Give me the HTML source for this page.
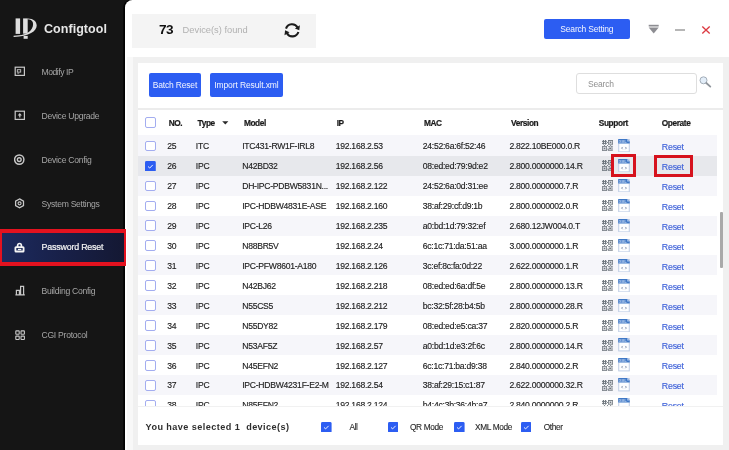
<!DOCTYPE html>
<html lang="en">
<head>
<meta charset="utf-8">
<title>Configtool</title>
<style>
*{box-sizing:border-box;margin:0;padding:0}
html,body{width:729px;height:450px;overflow:hidden}
body{position:relative;background:#151515;font-family:"Liberation Sans",Arial,sans-serif;font-size:8.1px;color:#222;-webkit-font-smoothing:antialiased}
#app{position:absolute;left:0;top:0;width:729px;height:450px;will-change:transform}
.abs{position:absolute}
/* sidebar */
#side{position:absolute;left:0;top:0;width:125px;height:450px;background:#151515}
#brand{position:absolute;left:44px;top:20.2px;height:18px;line-height:18px;font-size:12.5px;font-weight:700;color:#e6e6e6;letter-spacing:0.05px}
.mi{position:absolute;left:0;width:125px;height:30px;color:#a6a6a6;font-size:8.6px;letter-spacing:-0.27px}
.mi .t{position:absolute;left:41.5px;top:0.6px;line-height:30px;white-space:nowrap}
.mi svg{position:absolute;left:14.1px;top:9.5px}
.mi.act{color:#f4f4f4}
#actbox{position:absolute;left:0;top:228.7px;width:125.8px;height:37.7px;border:4px solid #e3121f;border-left-width:2.8px;border-right-width:2.8px;background:linear-gradient(90deg,#1c2a5e 0%,#182048 50%,#141833 100%)}
/* main */
#main{position:absolute;left:124.6px;top:0;width:605px;height:450px;background:#fff;border-top-left-radius:7.5px;box-shadow:-1.7px 0 0 #020202}
#found{position:absolute;left:132.4px;top:13.5px;width:183.4px;height:34.3px;background:#f4f4f4}
#cnt{position:absolute;left:159px;top:20px;line-height:19px;font-size:13.6px;font-weight:700;color:#111;letter-spacing:-0.55px}
#dfound{position:absolute;left:182.6px;top:20.5px;line-height:18px;font-size:9.3px;color:#b1b1b1}
#ss{position:absolute;left:543.5px;top:18.9px;width:86.7px;height:20.6px;background:#2c5df2;border-radius:2px;color:#f2f5ff;text-align:center;line-height:20.8px;font-size:8.5px;letter-spacing:-0.2px}
#gray{position:absolute;left:132.8px;top:57.4px;width:597px;height:393px;background:#f0f0f0}
#card{position:absolute;left:138.4px;top:63.2px;width:584.6px;height:382.1px;background:#fff;overflow:hidden}
.btn{position:absolute;top:10.2px;height:23.2px;background:#2c5df2;border-radius:2px;color:#f2f5ff;text-align:center;line-height:25.4px;white-space:nowrap;font-size:8.5px;letter-spacing:-0.17px}
#search{position:absolute;left:438.1px;top:10.3px;width:120.2px;height:20.2px;border:1px solid #dedede;border-radius:3px;background:#fff}
#search span{position:absolute;left:10.5px;top:0.4px;line-height:18.6px;color:#909090;font-size:8.5px;letter-spacing:-0.2px}
#hline{position:absolute;left:0;top:44.4px;width:584.6px;height:2px;background:#ececec}
#thead{position:absolute;left:0;top:46px;width:579px;height:25.8px;font-weight:700;font-size:8.3px;letter-spacing:-0.38px;color:#1a1a1a;-webkit-text-stroke:0.2px currentColor}
#thead span{position:absolute;top:0.6px;line-height:26.4px;white-space:nowrap}
#tbody{position:absolute;left:0;top:71.8px;width:579px;height:271px;overflow:hidden;background:linear-gradient(#f6f6fa,#f6f6fa) 0 0/100% 2px no-repeat}
.row{position:absolute;left:0;width:579px;height:19.95px;background:#fff}
.row.odd{background:#f6f6fa}
.row.sel{background:#e7e8ec}
.row .c{position:absolute;top:0.3px;line-height:20.6px;white-space:nowrap;font-size:8.6px;letter-spacing:-0.26px;-webkit-text-stroke:0.14px currentColor}
.cb{position:absolute;left:6.8px;top:4.9px;width:10.8px;height:10.8px;border:1.1px solid #a3adf0;border-radius:2px;background:#fff}
.cb.on{border:0;background:none}
.cb svg{display:block;width:10.8px;height:10.8px}
.no{left:28.9px}.ty{left:57.4px}.mo{left:103.8px}.ip{left:197.3px}.mac{left:284.4px}.ver{left:371px}
.rs{left:523.4px;top:1.2px !important;color:#3f62d9;font-size:8.8px !important;letter-spacing:-0.2px !important}
.row svg.qr{position:absolute;left:463.8px;top:4.4px}
.row svg.xml{position:absolute;left:479.2px;top:3.2px}
.hl{position:absolute;border:3.2px solid #d6121d}
#foot{position:absolute;left:0;top:343px;width:584.6px;height:39.2px;background:#fff;border-top:1px solid #f1f1f1}
#sel{position:absolute;left:7.2px;top:10.1px;line-height:20px;font-size:9.1px;letter-spacing:0.44px;font-weight:700;color:#2e2e2e;white-space:pre}
.fcb{position:absolute;top:14.4px;width:10.6px;height:10.6px}
.fcb svg{display:block;width:10.6px;height:10.6px}
.fl{position:absolute;top:9.9px;line-height:20px;font-size:8.3px;letter-spacing:-0.33px;color:#2a2a2a;white-space:nowrap;-webkit-text-stroke:0.12px currentColor}
#thumb{position:absolute;left:581.2px;top:149.2px;width:3.2px;height:55.4px;background:#a9a9a9;border-radius:1px}
</style>
</head>
<body>
<div id="app">
<div id="side">
  <svg class="abs" style="left:13px;top:17px" width="25" height="23" viewBox="0 0 25 23">
    <g fill="#dedede">
      <path d="M2.6 1.4H7.1V16.9H2.6Z"/>
      <path d="M10.1 1.4H14.7V16.7H10.1Z"/>
      <path d="M10.6 18.9H14.7V21.8H10.6Z"/>
      <path d="M14.7 1.4C20.5 1.4 23.7 4.4 23.7 8.6C23.7 14 16.5 19.6 0.6 20L0.6 18.7C9 18.7 14.4 16.9 17.3 13.8C20 10.8 20.6 7.6 19.7 5.1C19 3.3 17.3 2.4 14.7 2.2Z"/>
    </g>
  </svg>
  <div id="brand">Configtool</div>

  <div class="mi" style="top:56.5px">
    <svg style="top:9.2px" width="11" height="11" viewBox="0 0 11 11"><rect x="1.2" y="1.2" width="9.2" height="8.2" fill="none" stroke="#c8c8c8" stroke-width="1.2"/><rect x="3.3" y="3.7" width="3.4" height="2.4" fill="none" stroke="#c8c8c8" stroke-width="0.9"/><path d="M3.3 7.2H5.2" stroke="#c8c8c8" stroke-width="0.8"/></svg>
    <span class="t" style="letter-spacing:-0.45px">Modify IP</span></div>
  <div class="mi" style="top:100.8px">
    <svg style="top:8.8px" width="11" height="11" viewBox="0 0 11 11"><rect x="1.2" y="1.2" width="9.2" height="8.2" fill="none" stroke="#c8c8c8" stroke-width="1.2"/><path d="M5.8 3.1L7.9 5.5H6.4V7.5H5.2V5.5H3.7Z" fill="#c8c8c8"/></svg>
    <span class="t">Device Upgrade</span></div>
  <div class="mi" style="top:144.4px">
    <svg width="11" height="11" viewBox="0 0 11 11"><circle cx="5.25" cy="5.6" r="4.65" fill="none" stroke="#c8c8c8" stroke-width="1.45"/><circle cx="5.25" cy="5.6" r="1.9" fill="none" stroke="#c8c8c8" stroke-width="1.35"/></svg>
    <span class="t">Device Config</span></div>
  <div class="mi" style="top:188.3px">
    <svg width="11" height="11" viewBox="0 0 11 11"><path d="M5.55 0.9L9.5 3.1V7.6L5.55 9.8L1.6 7.6V3.1Z" fill="none" stroke="#c8c8c8" stroke-width="1.25"/><circle cx="5.55" cy="5.35" r="1.5" fill="none" stroke="#c8c8c8" stroke-width="1.15"/></svg>
    <span class="t">System Settings</span></div>
  <div class="mi" style="top:275.5px">
    <svg style="top:9.6px;left:14.8px" width="11" height="11" viewBox="0 0 11 11"><path d="M0.4 9.9H9.8M1.4 9.9V5.4H4.4V9.9M4.4 9.9M5.6 9.9V1.3H8.6V9.9" fill="none" stroke="#c8c8c8" stroke-width="1.2"/></svg>
    <span class="t">Building Config</span></div>
  <div class="mi" style="top:319.3px">
    <svg style="top:10.8px;left:14.8px" width="11" height="11" viewBox="0 0 11 11"><g fill="none" stroke="#c8c8c8" stroke-width="1.1"><rect x="0.8" y="0.9" width="3.4" height="3.4" rx="0.5"/><rect x="6" y="0.9" width="3.4" height="3.4" rx="0.5"/><rect x="0.8" y="6.1" width="3.4" height="3.4" rx="0.5"/><rect x="6" y="6.1" width="3.4" height="3.4" rx="0.5"/></g></svg>
    <span class="t">CGI Protocol</span></div>
</div>

<div id="main"></div>
<div id="actbox"></div>
<div class="mi act" style="top:232.2px">
    <svg width="11" height="11" viewBox="0 0 11 11"><path d="M3.6 5V3.6C3.6 2.2 4.5 1.5 5.5 1.5C6.5 1.5 7.4 2.2 7.4 3.6V5" fill="none" stroke="#f4f4f4" stroke-width="1.7"/><rect x="1.4" y="5.2" width="8.2" height="4.3" rx="0.6" fill="none" stroke="#f4f4f4" stroke-width="1.8"/><rect x="3.9" y="6.8" width="3.4" height="1.2" fill="#f4f4f4"/></svg>
    <span class="t" style="font-size:8.9px;letter-spacing:-0.2px;top:-0.3px;-webkit-text-stroke:0.2px currentColor">Password Reset</span></div>

<div id="found"></div>
<div id="cnt">73</div>
<div id="dfound">Device(s) found</div>
<svg class="abs" style="left:283px;top:21.5px" width="18" height="17" viewBox="0 0 18 17">
  <g fill="none" stroke="#1c1c1c" stroke-width="2.1">
    <path d="M3 6.6A6.3 6.3 0 0 1 14.6 5.6"/>
    <path d="M15.4 10A6.3 6.3 0 0 1 3.8 11"/>
  </g>
  <path d="M16.9 3.3L16.3 8.3L11.9 6.4Z" fill="#1c1c1c"/>
  <path d="M1.5 13.3L2.1 8.3L6.5 10.2Z" fill="#1c1c1c"/>
</svg>
<div id="ss">Search Setting</div>
<svg class="abs" style="left:647.5px;top:24px" width="12" height="11" viewBox="0 0 12 11"><rect x="0.7" y="0.8" width="10" height="1.7" fill="#8d8d92"/><path d="M0.7 3.6H10.7L5.7 9.4Z" fill="#8d8d92"/></svg>
<div class="abs" style="left:675px;top:28.6px;width:9.6px;height:2px;background:#b6b6b6"></div>
<svg class="abs" style="left:701px;top:24.5px" width="10" height="10" viewBox="0 0 10 10"><path d="M1.3 1.6L8.7 8.5M8.7 1.6L1.3 8.5" stroke="#dc3a42" stroke-width="1.35" fill="none"/></svg>

<div class="abs" style="left:126.6px;top:57.4px;width:7px;height:393px;background:#f8f8f8"></div>
<div id="gray"></div>
<div id="card">
  <div class="btn" style="left:10.2px;width:52.6px">Batch Reset</div>
  <div class="btn" style="left:71.8px;width:72.4px;letter-spacing:-0.1px">Import Result.xml</div>
  <div id="search"><span>Search</span></div>
  <svg class="abs" style="left:560px;top:13px" width="14" height="13" viewBox="0 0 14 13">
    <circle cx="5.5" cy="4.3" r="3.5" fill="#e3eef9" stroke="#a3adb8" stroke-width="1"/>
    <path d="M8.3 7L12.3 10.6" stroke="#8f959c" stroke-width="1.8" stroke-linecap="round"/>
  </svg>
  <div id="hline"></div>
  <div id="thead">
    <span class="cb" style="top:8.2px;line-height:0"></span>
    <span style="left:30.3px">NO.</span>
    <span style="left:59.2px">Type</span>
    <svg class="abs" style="left:83.8px;top:11.9px" width="7" height="4" viewBox="0 0 7 4"><path d="M0.2 0.2H6.4L3.3 3.4Z" fill="#2a2a2a"/></svg>
    <span style="left:105.5px">Model</span>
    <span style="left:198.3px">IP</span>
    <span style="left:285.5px">MAC</span>
    <span style="left:372.6px">Version</span>
    <span style="left:460.4px">Support</span>
    <span style="left:523.3px">Operate</span>
  </div>
  <div id="tbody">
<div class="row odd" style="top:0.80px"><span class="cb"></span><span class="c no">25</span><span class="c ty">ITC</span><span class="c mo">ITC431-RW1F-IRL8</span><span class="c ip">192.168.2.53</span><span class="c mac">24:52:6a:6f:52:46</span><span class="c ver">2.822.10BE000.0.R</span><svg class="qr" viewBox="0 0 11 11" width="11" height="11"><g fill="#4b555e" opacity="0.78">
<rect x="0.9" y="0" width="1.1" height="4.6"/><rect x="3" y="0" width="1.1" height="4.6"/><rect x="0" y="0.9" width="4.8" height="1"/><rect x="0" y="2.9" width="4.8" height="1"/>
<rect x="6.2" y="0" width="4.6" height="0.9"/><rect x="6.2" y="0" width="0.9" height="4.6"/><rect x="9.9" y="0" width="0.9" height="4.6"/><rect x="6.2" y="3.7" width="4.6" height="0.9"/><rect x="7.7" y="1.5" width="1.6" height="1.6"/>
<rect x="0.2" y="6.2" width="4.6" height="0.9"/><rect x="0.2" y="6.2" width="0.9" height="4.6"/><rect x="3.9" y="6.2" width="0.9" height="4.6"/><rect x="0.2" y="9.9" width="4.6" height="0.9"/><rect x="1.7" y="7.7" width="1.6" height="1.6"/>
<rect x="6.2" y="6.2" width="2.2" height="1"/><rect x="9.2" y="5.8" width="1.4" height="1.8"/><rect x="7.2" y="7.6" width="1.8" height="1.4"/><rect x="6" y="9.6" width="4.8" height="1.1"/><rect x="5.6" y="8.4" width="1" height="2"/><rect x="9.4" y="8.2" width="1.2" height="1.2"/><rect x="5" y="2" width="0.9" height="1"/><rect x="5" y="5" width="1" height="0.9"/><rect x="2" y="5" width="1" height="0.9"/><rect x="8" y="5" width="1" height="0.8"/>
</g></svg><svg class="xml" viewBox="0 0 12 14" width="12" height="13.4">
<rect x="0.5" y="0.5" width="11" height="13" fill="#fdfeff" stroke="#bccbe4" stroke-width="1"/>
<path d="M0 0H9.3L12 2.7V4.7H0Z" fill="#3f78c6"/>
<path d="M9.3 0L12 2.7H9.3Z" fill="#a9c3ea"/>
<text x="0.9" y="3.9" font-family="Liberation Sans, sans-serif" font-size="4.2" font-weight="700" fill="#bcd1ef" textLength="7.8" lengthAdjust="spacingAndGlyphs">XML</text>
<path d="M4.6 8.3L3.5 9.5L4.6 10.7M7.4 8.3L8.5 9.5L7.4 10.7" fill="none" stroke="#7f8ea8" stroke-width="1"/>
</svg><span class="c rs">Reset</span></div>
<div class="row sel" style="top:20.75px"><span class="cb on"><svg viewBox="0 0 11 11" width="11" height="11"><rect width="11" height="11" rx="1.5" fill="#2c5df2"/><path d="M3.1 5.6L4.8 7.2L7.9 4" fill="none" stroke="#fff" stroke-width="0.95"/></svg></span><span class="c no">26</span><span class="c ty">IPC</span><span class="c mo">N42BD32</span><span class="c ip">192.168.2.56</span><span class="c mac">08:ed:ed:79:9d:e2</span><span class="c ver">2.800.0000000.14.R</span><svg class="qr" viewBox="0 0 11 11" width="11" height="11"><g fill="#4b555e" opacity="0.78">
<rect x="0.9" y="0" width="1.1" height="4.6"/><rect x="3" y="0" width="1.1" height="4.6"/><rect x="0" y="0.9" width="4.8" height="1"/><rect x="0" y="2.9" width="4.8" height="1"/>
<rect x="6.2" y="0" width="4.6" height="0.9"/><rect x="6.2" y="0" width="0.9" height="4.6"/><rect x="9.9" y="0" width="0.9" height="4.6"/><rect x="6.2" y="3.7" width="4.6" height="0.9"/><rect x="7.7" y="1.5" width="1.6" height="1.6"/>
<rect x="0.2" y="6.2" width="4.6" height="0.9"/><rect x="0.2" y="6.2" width="0.9" height="4.6"/><rect x="3.9" y="6.2" width="0.9" height="4.6"/><rect x="0.2" y="9.9" width="4.6" height="0.9"/><rect x="1.7" y="7.7" width="1.6" height="1.6"/>
<rect x="6.2" y="6.2" width="2.2" height="1"/><rect x="9.2" y="5.8" width="1.4" height="1.8"/><rect x="7.2" y="7.6" width="1.8" height="1.4"/><rect x="6" y="9.6" width="4.8" height="1.1"/><rect x="5.6" y="8.4" width="1" height="2"/><rect x="9.4" y="8.2" width="1.2" height="1.2"/><rect x="5" y="2" width="0.9" height="1"/><rect x="5" y="5" width="1" height="0.9"/><rect x="2" y="5" width="1" height="0.9"/><rect x="8" y="5" width="1" height="0.8"/>
</g></svg><svg class="xml" viewBox="0 0 12 14" width="12" height="13.4">
<rect x="0.5" y="0.5" width="11" height="13" fill="#fdfeff" stroke="#bccbe4" stroke-width="1"/>
<path d="M0 0H9.3L12 2.7V4.7H0Z" fill="#3f78c6"/>
<path d="M9.3 0L12 2.7H9.3Z" fill="#a9c3ea"/>
<text x="0.9" y="3.9" font-family="Liberation Sans, sans-serif" font-size="4.2" font-weight="700" fill="#bcd1ef" textLength="7.8" lengthAdjust="spacingAndGlyphs">XML</text>
<path d="M4.6 8.3L3.5 9.5L4.6 10.7M7.4 8.3L8.5 9.5L7.4 10.7" fill="none" stroke="#7f8ea8" stroke-width="1"/>
</svg><span class="c rs">Reset</span></div>
<div class="row odd" style="top:40.70px"><span class="cb"></span><span class="c no">27</span><span class="c ty">IPC</span><span class="c mo">DH-IPC-PDBW5831N...</span><span class="c ip">192.168.2.122</span><span class="c mac">24:52:6a:0d:31:ee</span><span class="c ver">2.800.0000000.7.R</span><svg class="qr" viewBox="0 0 11 11" width="11" height="11"><g fill="#4b555e" opacity="0.78">
<rect x="0.9" y="0" width="1.1" height="4.6"/><rect x="3" y="0" width="1.1" height="4.6"/><rect x="0" y="0.9" width="4.8" height="1"/><rect x="0" y="2.9" width="4.8" height="1"/>
<rect x="6.2" y="0" width="4.6" height="0.9"/><rect x="6.2" y="0" width="0.9" height="4.6"/><rect x="9.9" y="0" width="0.9" height="4.6"/><rect x="6.2" y="3.7" width="4.6" height="0.9"/><rect x="7.7" y="1.5" width="1.6" height="1.6"/>
<rect x="0.2" y="6.2" width="4.6" height="0.9"/><rect x="0.2" y="6.2" width="0.9" height="4.6"/><rect x="3.9" y="6.2" width="0.9" height="4.6"/><rect x="0.2" y="9.9" width="4.6" height="0.9"/><rect x="1.7" y="7.7" width="1.6" height="1.6"/>
<rect x="6.2" y="6.2" width="2.2" height="1"/><rect x="9.2" y="5.8" width="1.4" height="1.8"/><rect x="7.2" y="7.6" width="1.8" height="1.4"/><rect x="6" y="9.6" width="4.8" height="1.1"/><rect x="5.6" y="8.4" width="1" height="2"/><rect x="9.4" y="8.2" width="1.2" height="1.2"/><rect x="5" y="2" width="0.9" height="1"/><rect x="5" y="5" width="1" height="0.9"/><rect x="2" y="5" width="1" height="0.9"/><rect x="8" y="5" width="1" height="0.8"/>
</g></svg><svg class="xml" viewBox="0 0 12 14" width="12" height="13.4">
<rect x="0.5" y="0.5" width="11" height="13" fill="#fdfeff" stroke="#bccbe4" stroke-width="1"/>
<path d="M0 0H9.3L12 2.7V4.7H0Z" fill="#3f78c6"/>
<path d="M9.3 0L12 2.7H9.3Z" fill="#a9c3ea"/>
<text x="0.9" y="3.9" font-family="Liberation Sans, sans-serif" font-size="4.2" font-weight="700" fill="#bcd1ef" textLength="7.8" lengthAdjust="spacingAndGlyphs">XML</text>
<path d="M4.6 8.3L3.5 9.5L4.6 10.7M7.4 8.3L8.5 9.5L7.4 10.7" fill="none" stroke="#7f8ea8" stroke-width="1"/>
</svg><span class="c rs">Reset</span></div>
<div class="row" style="top:60.65px"><span class="cb"></span><span class="c no">28</span><span class="c ty">IPC</span><span class="c mo">IPC-HDBW4831E-ASE</span><span class="c ip">192.168.2.160</span><span class="c mac">38:af:29:cf:d9:1b</span><span class="c ver">2.800.0000002.0.R</span><svg class="qr" viewBox="0 0 11 11" width="11" height="11"><g fill="#4b555e" opacity="0.78">
<rect x="0.9" y="0" width="1.1" height="4.6"/><rect x="3" y="0" width="1.1" height="4.6"/><rect x="0" y="0.9" width="4.8" height="1"/><rect x="0" y="2.9" width="4.8" height="1"/>
<rect x="6.2" y="0" width="4.6" height="0.9"/><rect x="6.2" y="0" width="0.9" height="4.6"/><rect x="9.9" y="0" width="0.9" height="4.6"/><rect x="6.2" y="3.7" width="4.6" height="0.9"/><rect x="7.7" y="1.5" width="1.6" height="1.6"/>
<rect x="0.2" y="6.2" width="4.6" height="0.9"/><rect x="0.2" y="6.2" width="0.9" height="4.6"/><rect x="3.9" y="6.2" width="0.9" height="4.6"/><rect x="0.2" y="9.9" width="4.6" height="0.9"/><rect x="1.7" y="7.7" width="1.6" height="1.6"/>
<rect x="6.2" y="6.2" width="2.2" height="1"/><rect x="9.2" y="5.8" width="1.4" height="1.8"/><rect x="7.2" y="7.6" width="1.8" height="1.4"/><rect x="6" y="9.6" width="4.8" height="1.1"/><rect x="5.6" y="8.4" width="1" height="2"/><rect x="9.4" y="8.2" width="1.2" height="1.2"/><rect x="5" y="2" width="0.9" height="1"/><rect x="5" y="5" width="1" height="0.9"/><rect x="2" y="5" width="1" height="0.9"/><rect x="8" y="5" width="1" height="0.8"/>
</g></svg><svg class="xml" viewBox="0 0 12 14" width="12" height="13.4">
<rect x="0.5" y="0.5" width="11" height="13" fill="#fdfeff" stroke="#bccbe4" stroke-width="1"/>
<path d="M0 0H9.3L12 2.7V4.7H0Z" fill="#3f78c6"/>
<path d="M9.3 0L12 2.7H9.3Z" fill="#a9c3ea"/>
<text x="0.9" y="3.9" font-family="Liberation Sans, sans-serif" font-size="4.2" font-weight="700" fill="#bcd1ef" textLength="7.8" lengthAdjust="spacingAndGlyphs">XML</text>
<path d="M4.6 8.3L3.5 9.5L4.6 10.7M7.4 8.3L8.5 9.5L7.4 10.7" fill="none" stroke="#7f8ea8" stroke-width="1"/>
</svg><span class="c rs">Reset</span></div>
<div class="row odd" style="top:80.60px"><span class="cb"></span><span class="c no">29</span><span class="c ty">IPC</span><span class="c mo">IPC-L26</span><span class="c ip">192.168.2.235</span><span class="c mac">a0:bd:1d:79:32:ef</span><span class="c ver">2.680.12JW004.0.T</span><svg class="qr" viewBox="0 0 11 11" width="11" height="11"><g fill="#4b555e" opacity="0.78">
<rect x="0.9" y="0" width="1.1" height="4.6"/><rect x="3" y="0" width="1.1" height="4.6"/><rect x="0" y="0.9" width="4.8" height="1"/><rect x="0" y="2.9" width="4.8" height="1"/>
<rect x="6.2" y="0" width="4.6" height="0.9"/><rect x="6.2" y="0" width="0.9" height="4.6"/><rect x="9.9" y="0" width="0.9" height="4.6"/><rect x="6.2" y="3.7" width="4.6" height="0.9"/><rect x="7.7" y="1.5" width="1.6" height="1.6"/>
<rect x="0.2" y="6.2" width="4.6" height="0.9"/><rect x="0.2" y="6.2" width="0.9" height="4.6"/><rect x="3.9" y="6.2" width="0.9" height="4.6"/><rect x="0.2" y="9.9" width="4.6" height="0.9"/><rect x="1.7" y="7.7" width="1.6" height="1.6"/>
<rect x="6.2" y="6.2" width="2.2" height="1"/><rect x="9.2" y="5.8" width="1.4" height="1.8"/><rect x="7.2" y="7.6" width="1.8" height="1.4"/><rect x="6" y="9.6" width="4.8" height="1.1"/><rect x="5.6" y="8.4" width="1" height="2"/><rect x="9.4" y="8.2" width="1.2" height="1.2"/><rect x="5" y="2" width="0.9" height="1"/><rect x="5" y="5" width="1" height="0.9"/><rect x="2" y="5" width="1" height="0.9"/><rect x="8" y="5" width="1" height="0.8"/>
</g></svg><svg class="xml" viewBox="0 0 12 14" width="12" height="13.4">
<rect x="0.5" y="0.5" width="11" height="13" fill="#fdfeff" stroke="#bccbe4" stroke-width="1"/>
<path d="M0 0H9.3L12 2.7V4.7H0Z" fill="#3f78c6"/>
<path d="M9.3 0L12 2.7H9.3Z" fill="#a9c3ea"/>
<text x="0.9" y="3.9" font-family="Liberation Sans, sans-serif" font-size="4.2" font-weight="700" fill="#bcd1ef" textLength="7.8" lengthAdjust="spacingAndGlyphs">XML</text>
<path d="M4.6 8.3L3.5 9.5L4.6 10.7M7.4 8.3L8.5 9.5L7.4 10.7" fill="none" stroke="#7f8ea8" stroke-width="1"/>
</svg><span class="c rs">Reset</span></div>
<div class="row" style="top:100.55px"><span class="cb"></span><span class="c no">30</span><span class="c ty">IPC</span><span class="c mo">N88BR5V</span><span class="c ip">192.168.2.24</span><span class="c mac">6c:1c:71:da:51:aa</span><span class="c ver">3.000.0000000.1.R</span><svg class="qr" viewBox="0 0 11 11" width="11" height="11"><g fill="#4b555e" opacity="0.78">
<rect x="0.9" y="0" width="1.1" height="4.6"/><rect x="3" y="0" width="1.1" height="4.6"/><rect x="0" y="0.9" width="4.8" height="1"/><rect x="0" y="2.9" width="4.8" height="1"/>
<rect x="6.2" y="0" width="4.6" height="0.9"/><rect x="6.2" y="0" width="0.9" height="4.6"/><rect x="9.9" y="0" width="0.9" height="4.6"/><rect x="6.2" y="3.7" width="4.6" height="0.9"/><rect x="7.7" y="1.5" width="1.6" height="1.6"/>
<rect x="0.2" y="6.2" width="4.6" height="0.9"/><rect x="0.2" y="6.2" width="0.9" height="4.6"/><rect x="3.9" y="6.2" width="0.9" height="4.6"/><rect x="0.2" y="9.9" width="4.6" height="0.9"/><rect x="1.7" y="7.7" width="1.6" height="1.6"/>
<rect x="6.2" y="6.2" width="2.2" height="1"/><rect x="9.2" y="5.8" width="1.4" height="1.8"/><rect x="7.2" y="7.6" width="1.8" height="1.4"/><rect x="6" y="9.6" width="4.8" height="1.1"/><rect x="5.6" y="8.4" width="1" height="2"/><rect x="9.4" y="8.2" width="1.2" height="1.2"/><rect x="5" y="2" width="0.9" height="1"/><rect x="5" y="5" width="1" height="0.9"/><rect x="2" y="5" width="1" height="0.9"/><rect x="8" y="5" width="1" height="0.8"/>
</g></svg><svg class="xml" viewBox="0 0 12 14" width="12" height="13.4">
<rect x="0.5" y="0.5" width="11" height="13" fill="#fdfeff" stroke="#bccbe4" stroke-width="1"/>
<path d="M0 0H9.3L12 2.7V4.7H0Z" fill="#3f78c6"/>
<path d="M9.3 0L12 2.7H9.3Z" fill="#a9c3ea"/>
<text x="0.9" y="3.9" font-family="Liberation Sans, sans-serif" font-size="4.2" font-weight="700" fill="#bcd1ef" textLength="7.8" lengthAdjust="spacingAndGlyphs">XML</text>
<path d="M4.6 8.3L3.5 9.5L4.6 10.7M7.4 8.3L8.5 9.5L7.4 10.7" fill="none" stroke="#7f8ea8" stroke-width="1"/>
</svg><span class="c rs">Reset</span></div>
<div class="row odd" style="top:120.50px"><span class="cb"></span><span class="c no">31</span><span class="c ty">IPC</span><span class="c mo">IPC-PFW8601-A180</span><span class="c ip">192.168.2.126</span><span class="c mac">3c:ef:8c:fa:0d:22</span><span class="c ver">2.622.0000000.1.R</span><svg class="qr" viewBox="0 0 11 11" width="11" height="11"><g fill="#4b555e" opacity="0.78">
<rect x="0.9" y="0" width="1.1" height="4.6"/><rect x="3" y="0" width="1.1" height="4.6"/><rect x="0" y="0.9" width="4.8" height="1"/><rect x="0" y="2.9" width="4.8" height="1"/>
<rect x="6.2" y="0" width="4.6" height="0.9"/><rect x="6.2" y="0" width="0.9" height="4.6"/><rect x="9.9" y="0" width="0.9" height="4.6"/><rect x="6.2" y="3.7" width="4.6" height="0.9"/><rect x="7.7" y="1.5" width="1.6" height="1.6"/>
<rect x="0.2" y="6.2" width="4.6" height="0.9"/><rect x="0.2" y="6.2" width="0.9" height="4.6"/><rect x="3.9" y="6.2" width="0.9" height="4.6"/><rect x="0.2" y="9.9" width="4.6" height="0.9"/><rect x="1.7" y="7.7" width="1.6" height="1.6"/>
<rect x="6.2" y="6.2" width="2.2" height="1"/><rect x="9.2" y="5.8" width="1.4" height="1.8"/><rect x="7.2" y="7.6" width="1.8" height="1.4"/><rect x="6" y="9.6" width="4.8" height="1.1"/><rect x="5.6" y="8.4" width="1" height="2"/><rect x="9.4" y="8.2" width="1.2" height="1.2"/><rect x="5" y="2" width="0.9" height="1"/><rect x="5" y="5" width="1" height="0.9"/><rect x="2" y="5" width="1" height="0.9"/><rect x="8" y="5" width="1" height="0.8"/>
</g></svg><svg class="xml" viewBox="0 0 12 14" width="12" height="13.4">
<rect x="0.5" y="0.5" width="11" height="13" fill="#fdfeff" stroke="#bccbe4" stroke-width="1"/>
<path d="M0 0H9.3L12 2.7V4.7H0Z" fill="#3f78c6"/>
<path d="M9.3 0L12 2.7H9.3Z" fill="#a9c3ea"/>
<text x="0.9" y="3.9" font-family="Liberation Sans, sans-serif" font-size="4.2" font-weight="700" fill="#bcd1ef" textLength="7.8" lengthAdjust="spacingAndGlyphs">XML</text>
<path d="M4.6 8.3L3.5 9.5L4.6 10.7M7.4 8.3L8.5 9.5L7.4 10.7" fill="none" stroke="#7f8ea8" stroke-width="1"/>
</svg><span class="c rs">Reset</span></div>
<div class="row" style="top:140.45px"><span class="cb"></span><span class="c no">32</span><span class="c ty">IPC</span><span class="c mo">N42BJ62</span><span class="c ip">192.168.2.218</span><span class="c mac">08:ed:ed:6a:df:5e</span><span class="c ver">2.800.0000000.13.R</span><svg class="qr" viewBox="0 0 11 11" width="11" height="11"><g fill="#4b555e" opacity="0.78">
<rect x="0.9" y="0" width="1.1" height="4.6"/><rect x="3" y="0" width="1.1" height="4.6"/><rect x="0" y="0.9" width="4.8" height="1"/><rect x="0" y="2.9" width="4.8" height="1"/>
<rect x="6.2" y="0" width="4.6" height="0.9"/><rect x="6.2" y="0" width="0.9" height="4.6"/><rect x="9.9" y="0" width="0.9" height="4.6"/><rect x="6.2" y="3.7" width="4.6" height="0.9"/><rect x="7.7" y="1.5" width="1.6" height="1.6"/>
<rect x="0.2" y="6.2" width="4.6" height="0.9"/><rect x="0.2" y="6.2" width="0.9" height="4.6"/><rect x="3.9" y="6.2" width="0.9" height="4.6"/><rect x="0.2" y="9.9" width="4.6" height="0.9"/><rect x="1.7" y="7.7" width="1.6" height="1.6"/>
<rect x="6.2" y="6.2" width="2.2" height="1"/><rect x="9.2" y="5.8" width="1.4" height="1.8"/><rect x="7.2" y="7.6" width="1.8" height="1.4"/><rect x="6" y="9.6" width="4.8" height="1.1"/><rect x="5.6" y="8.4" width="1" height="2"/><rect x="9.4" y="8.2" width="1.2" height="1.2"/><rect x="5" y="2" width="0.9" height="1"/><rect x="5" y="5" width="1" height="0.9"/><rect x="2" y="5" width="1" height="0.9"/><rect x="8" y="5" width="1" height="0.8"/>
</g></svg><svg class="xml" viewBox="0 0 12 14" width="12" height="13.4">
<rect x="0.5" y="0.5" width="11" height="13" fill="#fdfeff" stroke="#bccbe4" stroke-width="1"/>
<path d="M0 0H9.3L12 2.7V4.7H0Z" fill="#3f78c6"/>
<path d="M9.3 0L12 2.7H9.3Z" fill="#a9c3ea"/>
<text x="0.9" y="3.9" font-family="Liberation Sans, sans-serif" font-size="4.2" font-weight="700" fill="#bcd1ef" textLength="7.8" lengthAdjust="spacingAndGlyphs">XML</text>
<path d="M4.6 8.3L3.5 9.5L4.6 10.7M7.4 8.3L8.5 9.5L7.4 10.7" fill="none" stroke="#7f8ea8" stroke-width="1"/>
</svg><span class="c rs">Reset</span></div>
<div class="row odd" style="top:160.40px"><span class="cb"></span><span class="c no">33</span><span class="c ty">IPC</span><span class="c mo">N55CS5</span><span class="c ip">192.168.2.212</span><span class="c mac">bc:32:5f:28:b4:5b</span><span class="c ver">2.800.0000000.28.R</span><svg class="qr" viewBox="0 0 11 11" width="11" height="11"><g fill="#4b555e" opacity="0.78">
<rect x="0.9" y="0" width="1.1" height="4.6"/><rect x="3" y="0" width="1.1" height="4.6"/><rect x="0" y="0.9" width="4.8" height="1"/><rect x="0" y="2.9" width="4.8" height="1"/>
<rect x="6.2" y="0" width="4.6" height="0.9"/><rect x="6.2" y="0" width="0.9" height="4.6"/><rect x="9.9" y="0" width="0.9" height="4.6"/><rect x="6.2" y="3.7" width="4.6" height="0.9"/><rect x="7.7" y="1.5" width="1.6" height="1.6"/>
<rect x="0.2" y="6.2" width="4.6" height="0.9"/><rect x="0.2" y="6.2" width="0.9" height="4.6"/><rect x="3.9" y="6.2" width="0.9" height="4.6"/><rect x="0.2" y="9.9" width="4.6" height="0.9"/><rect x="1.7" y="7.7" width="1.6" height="1.6"/>
<rect x="6.2" y="6.2" width="2.2" height="1"/><rect x="9.2" y="5.8" width="1.4" height="1.8"/><rect x="7.2" y="7.6" width="1.8" height="1.4"/><rect x="6" y="9.6" width="4.8" height="1.1"/><rect x="5.6" y="8.4" width="1" height="2"/><rect x="9.4" y="8.2" width="1.2" height="1.2"/><rect x="5" y="2" width="0.9" height="1"/><rect x="5" y="5" width="1" height="0.9"/><rect x="2" y="5" width="1" height="0.9"/><rect x="8" y="5" width="1" height="0.8"/>
</g></svg><svg class="xml" viewBox="0 0 12 14" width="12" height="13.4">
<rect x="0.5" y="0.5" width="11" height="13" fill="#fdfeff" stroke="#bccbe4" stroke-width="1"/>
<path d="M0 0H9.3L12 2.7V4.7H0Z" fill="#3f78c6"/>
<path d="M9.3 0L12 2.7H9.3Z" fill="#a9c3ea"/>
<text x="0.9" y="3.9" font-family="Liberation Sans, sans-serif" font-size="4.2" font-weight="700" fill="#bcd1ef" textLength="7.8" lengthAdjust="spacingAndGlyphs">XML</text>
<path d="M4.6 8.3L3.5 9.5L4.6 10.7M7.4 8.3L8.5 9.5L7.4 10.7" fill="none" stroke="#7f8ea8" stroke-width="1"/>
</svg><span class="c rs">Reset</span></div>
<div class="row" style="top:180.35px"><span class="cb"></span><span class="c no">34</span><span class="c ty">IPC</span><span class="c mo">N55DY82</span><span class="c ip">192.168.2.179</span><span class="c mac">08:ed:ed:e5:ca:37</span><span class="c ver">2.820.0000000.5.R</span><svg class="qr" viewBox="0 0 11 11" width="11" height="11"><g fill="#4b555e" opacity="0.78">
<rect x="0.9" y="0" width="1.1" height="4.6"/><rect x="3" y="0" width="1.1" height="4.6"/><rect x="0" y="0.9" width="4.8" height="1"/><rect x="0" y="2.9" width="4.8" height="1"/>
<rect x="6.2" y="0" width="4.6" height="0.9"/><rect x="6.2" y="0" width="0.9" height="4.6"/><rect x="9.9" y="0" width="0.9" height="4.6"/><rect x="6.2" y="3.7" width="4.6" height="0.9"/><rect x="7.7" y="1.5" width="1.6" height="1.6"/>
<rect x="0.2" y="6.2" width="4.6" height="0.9"/><rect x="0.2" y="6.2" width="0.9" height="4.6"/><rect x="3.9" y="6.2" width="0.9" height="4.6"/><rect x="0.2" y="9.9" width="4.6" height="0.9"/><rect x="1.7" y="7.7" width="1.6" height="1.6"/>
<rect x="6.2" y="6.2" width="2.2" height="1"/><rect x="9.2" y="5.8" width="1.4" height="1.8"/><rect x="7.2" y="7.6" width="1.8" height="1.4"/><rect x="6" y="9.6" width="4.8" height="1.1"/><rect x="5.6" y="8.4" width="1" height="2"/><rect x="9.4" y="8.2" width="1.2" height="1.2"/><rect x="5" y="2" width="0.9" height="1"/><rect x="5" y="5" width="1" height="0.9"/><rect x="2" y="5" width="1" height="0.9"/><rect x="8" y="5" width="1" height="0.8"/>
</g></svg><svg class="xml" viewBox="0 0 12 14" width="12" height="13.4">
<rect x="0.5" y="0.5" width="11" height="13" fill="#fdfeff" stroke="#bccbe4" stroke-width="1"/>
<path d="M0 0H9.3L12 2.7V4.7H0Z" fill="#3f78c6"/>
<path d="M9.3 0L12 2.7H9.3Z" fill="#a9c3ea"/>
<text x="0.9" y="3.9" font-family="Liberation Sans, sans-serif" font-size="4.2" font-weight="700" fill="#bcd1ef" textLength="7.8" lengthAdjust="spacingAndGlyphs">XML</text>
<path d="M4.6 8.3L3.5 9.5L4.6 10.7M7.4 8.3L8.5 9.5L7.4 10.7" fill="none" stroke="#7f8ea8" stroke-width="1"/>
</svg><span class="c rs">Reset</span></div>
<div class="row odd" style="top:200.30px"><span class="cb"></span><span class="c no">35</span><span class="c ty">IPC</span><span class="c mo">N53AF5Z</span><span class="c ip">192.168.2.57</span><span class="c mac">a0:bd:1d:e3:2f:6c</span><span class="c ver">2.800.0000000.14.R</span><svg class="qr" viewBox="0 0 11 11" width="11" height="11"><g fill="#4b555e" opacity="0.78">
<rect x="0.9" y="0" width="1.1" height="4.6"/><rect x="3" y="0" width="1.1" height="4.6"/><rect x="0" y="0.9" width="4.8" height="1"/><rect x="0" y="2.9" width="4.8" height="1"/>
<rect x="6.2" y="0" width="4.6" height="0.9"/><rect x="6.2" y="0" width="0.9" height="4.6"/><rect x="9.9" y="0" width="0.9" height="4.6"/><rect x="6.2" y="3.7" width="4.6" height="0.9"/><rect x="7.7" y="1.5" width="1.6" height="1.6"/>
<rect x="0.2" y="6.2" width="4.6" height="0.9"/><rect x="0.2" y="6.2" width="0.9" height="4.6"/><rect x="3.9" y="6.2" width="0.9" height="4.6"/><rect x="0.2" y="9.9" width="4.6" height="0.9"/><rect x="1.7" y="7.7" width="1.6" height="1.6"/>
<rect x="6.2" y="6.2" width="2.2" height="1"/><rect x="9.2" y="5.8" width="1.4" height="1.8"/><rect x="7.2" y="7.6" width="1.8" height="1.4"/><rect x="6" y="9.6" width="4.8" height="1.1"/><rect x="5.6" y="8.4" width="1" height="2"/><rect x="9.4" y="8.2" width="1.2" height="1.2"/><rect x="5" y="2" width="0.9" height="1"/><rect x="5" y="5" width="1" height="0.9"/><rect x="2" y="5" width="1" height="0.9"/><rect x="8" y="5" width="1" height="0.8"/>
</g></svg><svg class="xml" viewBox="0 0 12 14" width="12" height="13.4">
<rect x="0.5" y="0.5" width="11" height="13" fill="#fdfeff" stroke="#bccbe4" stroke-width="1"/>
<path d="M0 0H9.3L12 2.7V4.7H0Z" fill="#3f78c6"/>
<path d="M9.3 0L12 2.7H9.3Z" fill="#a9c3ea"/>
<text x="0.9" y="3.9" font-family="Liberation Sans, sans-serif" font-size="4.2" font-weight="700" fill="#bcd1ef" textLength="7.8" lengthAdjust="spacingAndGlyphs">XML</text>
<path d="M4.6 8.3L3.5 9.5L4.6 10.7M7.4 8.3L8.5 9.5L7.4 10.7" fill="none" stroke="#7f8ea8" stroke-width="1"/>
</svg><span class="c rs">Reset</span></div>
<div class="row" style="top:220.25px"><span class="cb"></span><span class="c no">36</span><span class="c ty">IPC</span><span class="c mo">N45EFN2</span><span class="c ip">192.168.2.127</span><span class="c mac">6c:1c:71:ba:d9:38</span><span class="c ver">2.840.0000000.2.R</span><svg class="qr" viewBox="0 0 11 11" width="11" height="11"><g fill="#4b555e" opacity="0.78">
<rect x="0.9" y="0" width="1.1" height="4.6"/><rect x="3" y="0" width="1.1" height="4.6"/><rect x="0" y="0.9" width="4.8" height="1"/><rect x="0" y="2.9" width="4.8" height="1"/>
<rect x="6.2" y="0" width="4.6" height="0.9"/><rect x="6.2" y="0" width="0.9" height="4.6"/><rect x="9.9" y="0" width="0.9" height="4.6"/><rect x="6.2" y="3.7" width="4.6" height="0.9"/><rect x="7.7" y="1.5" width="1.6" height="1.6"/>
<rect x="0.2" y="6.2" width="4.6" height="0.9"/><rect x="0.2" y="6.2" width="0.9" height="4.6"/><rect x="3.9" y="6.2" width="0.9" height="4.6"/><rect x="0.2" y="9.9" width="4.6" height="0.9"/><rect x="1.7" y="7.7" width="1.6" height="1.6"/>
<rect x="6.2" y="6.2" width="2.2" height="1"/><rect x="9.2" y="5.8" width="1.4" height="1.8"/><rect x="7.2" y="7.6" width="1.8" height="1.4"/><rect x="6" y="9.6" width="4.8" height="1.1"/><rect x="5.6" y="8.4" width="1" height="2"/><rect x="9.4" y="8.2" width="1.2" height="1.2"/><rect x="5" y="2" width="0.9" height="1"/><rect x="5" y="5" width="1" height="0.9"/><rect x="2" y="5" width="1" height="0.9"/><rect x="8" y="5" width="1" height="0.8"/>
</g></svg><svg class="xml" viewBox="0 0 12 14" width="12" height="13.4">
<rect x="0.5" y="0.5" width="11" height="13" fill="#fdfeff" stroke="#bccbe4" stroke-width="1"/>
<path d="M0 0H9.3L12 2.7V4.7H0Z" fill="#3f78c6"/>
<path d="M9.3 0L12 2.7H9.3Z" fill="#a9c3ea"/>
<text x="0.9" y="3.9" font-family="Liberation Sans, sans-serif" font-size="4.2" font-weight="700" fill="#bcd1ef" textLength="7.8" lengthAdjust="spacingAndGlyphs">XML</text>
<path d="M4.6 8.3L3.5 9.5L4.6 10.7M7.4 8.3L8.5 9.5L7.4 10.7" fill="none" stroke="#7f8ea8" stroke-width="1"/>
</svg><span class="c rs">Reset</span></div>
<div class="row odd" style="top:240.20px"><span class="cb"></span><span class="c no">37</span><span class="c ty">IPC</span><span class="c mo">IPC-HDBW4231F-E2-M</span><span class="c ip">192.168.2.54</span><span class="c mac">38:af:29:15:c1:87</span><span class="c ver">2.622.0000000.32.R</span><svg class="qr" viewBox="0 0 11 11" width="11" height="11"><g fill="#4b555e" opacity="0.78">
<rect x="0.9" y="0" width="1.1" height="4.6"/><rect x="3" y="0" width="1.1" height="4.6"/><rect x="0" y="0.9" width="4.8" height="1"/><rect x="0" y="2.9" width="4.8" height="1"/>
<rect x="6.2" y="0" width="4.6" height="0.9"/><rect x="6.2" y="0" width="0.9" height="4.6"/><rect x="9.9" y="0" width="0.9" height="4.6"/><rect x="6.2" y="3.7" width="4.6" height="0.9"/><rect x="7.7" y="1.5" width="1.6" height="1.6"/>
<rect x="0.2" y="6.2" width="4.6" height="0.9"/><rect x="0.2" y="6.2" width="0.9" height="4.6"/><rect x="3.9" y="6.2" width="0.9" height="4.6"/><rect x="0.2" y="9.9" width="4.6" height="0.9"/><rect x="1.7" y="7.7" width="1.6" height="1.6"/>
<rect x="6.2" y="6.2" width="2.2" height="1"/><rect x="9.2" y="5.8" width="1.4" height="1.8"/><rect x="7.2" y="7.6" width="1.8" height="1.4"/><rect x="6" y="9.6" width="4.8" height="1.1"/><rect x="5.6" y="8.4" width="1" height="2"/><rect x="9.4" y="8.2" width="1.2" height="1.2"/><rect x="5" y="2" width="0.9" height="1"/><rect x="5" y="5" width="1" height="0.9"/><rect x="2" y="5" width="1" height="0.9"/><rect x="8" y="5" width="1" height="0.8"/>
</g></svg><svg class="xml" viewBox="0 0 12 14" width="12" height="13.4">
<rect x="0.5" y="0.5" width="11" height="13" fill="#fdfeff" stroke="#bccbe4" stroke-width="1"/>
<path d="M0 0H9.3L12 2.7V4.7H0Z" fill="#3f78c6"/>
<path d="M9.3 0L12 2.7H9.3Z" fill="#a9c3ea"/>
<text x="0.9" y="3.9" font-family="Liberation Sans, sans-serif" font-size="4.2" font-weight="700" fill="#bcd1ef" textLength="7.8" lengthAdjust="spacingAndGlyphs">XML</text>
<path d="M4.6 8.3L3.5 9.5L4.6 10.7M7.4 8.3L8.5 9.5L7.4 10.7" fill="none" stroke="#7f8ea8" stroke-width="1"/>
</svg><span class="c rs">Reset</span></div>
<div class="row" style="top:260.15px"><span class="cb"></span><span class="c no">38</span><span class="c ty">IPC</span><span class="c mo">N85EFN2</span><span class="c ip">192.168.2.124</span><span class="c mac">b4:4c:3b:36:4b:a7</span><span class="c ver">2.840.0000000.2.R</span><svg class="qr" viewBox="0 0 11 11" width="11" height="11"><g fill="#4b555e" opacity="0.78">
<rect x="0.9" y="0" width="1.1" height="4.6"/><rect x="3" y="0" width="1.1" height="4.6"/><rect x="0" y="0.9" width="4.8" height="1"/><rect x="0" y="2.9" width="4.8" height="1"/>
<rect x="6.2" y="0" width="4.6" height="0.9"/><rect x="6.2" y="0" width="0.9" height="4.6"/><rect x="9.9" y="0" width="0.9" height="4.6"/><rect x="6.2" y="3.7" width="4.6" height="0.9"/><rect x="7.7" y="1.5" width="1.6" height="1.6"/>
<rect x="0.2" y="6.2" width="4.6" height="0.9"/><rect x="0.2" y="6.2" width="0.9" height="4.6"/><rect x="3.9" y="6.2" width="0.9" height="4.6"/><rect x="0.2" y="9.9" width="4.6" height="0.9"/><rect x="1.7" y="7.7" width="1.6" height="1.6"/>
<rect x="6.2" y="6.2" width="2.2" height="1"/><rect x="9.2" y="5.8" width="1.4" height="1.8"/><rect x="7.2" y="7.6" width="1.8" height="1.4"/><rect x="6" y="9.6" width="4.8" height="1.1"/><rect x="5.6" y="8.4" width="1" height="2"/><rect x="9.4" y="8.2" width="1.2" height="1.2"/><rect x="5" y="2" width="0.9" height="1"/><rect x="5" y="5" width="1" height="0.9"/><rect x="2" y="5" width="1" height="0.9"/><rect x="8" y="5" width="1" height="0.8"/>
</g></svg><svg class="xml" viewBox="0 0 12 14" width="12" height="13.4">
<rect x="0.5" y="0.5" width="11" height="13" fill="#fdfeff" stroke="#bccbe4" stroke-width="1"/>
<path d="M0 0H9.3L12 2.7V4.7H0Z" fill="#3f78c6"/>
<path d="M9.3 0L12 2.7H9.3Z" fill="#a9c3ea"/>
<text x="0.9" y="3.9" font-family="Liberation Sans, sans-serif" font-size="4.2" font-weight="700" fill="#bcd1ef" textLength="7.8" lengthAdjust="spacingAndGlyphs">XML</text>
<path d="M4.6 8.3L3.5 9.5L4.6 10.7M7.4 8.3L8.5 9.5L7.4 10.7" fill="none" stroke="#7f8ea8" stroke-width="1"/>
</svg><span class="c rs">Reset</span></div>
    <div class="hl" style="left:472.8px;top:18.9px;width:25.2px;height:23px"></div>
    <div class="hl" style="left:515.6px;top:20.5px;width:39px;height:21.8px"></div>
  </div>
  <div id="thumb"></div>
  <div id="foot">
    <div id="sel">You have selected 1  device(s)</div>
    <span class="fcb" style="left:182.8px"><svg viewBox="0 0 11 11" width="11" height="11"><rect width="11" height="11" rx="1.5" fill="#2c5df2"/><path d="M3.1 5.6L4.8 7.2L7.9 4" fill="none" stroke="#fff" stroke-width="0.95"/></svg></span><span class="fl" style="left:211px">All</span>
    <span class="fcb" style="left:249.4px"><svg viewBox="0 0 11 11" width="11" height="11"><rect width="11" height="11" rx="1.5" fill="#2c5df2"/><path d="M3.1 5.6L4.8 7.2L7.9 4" fill="none" stroke="#fff" stroke-width="0.95"/></svg></span><span class="fl" style="left:271.5px">QR Mode</span>
    <span class="fcb" style="left:316px"><svg viewBox="0 0 11 11" width="11" height="11"><rect width="11" height="11" rx="1.5" fill="#2c5df2"/><path d="M3.1 5.6L4.8 7.2L7.9 4" fill="none" stroke="#fff" stroke-width="0.95"/></svg></span><span class="fl" style="left:336.6px">XML Mode</span>
    <span class="fcb" style="left:382.4px"><svg viewBox="0 0 11 11" width="11" height="11"><rect width="11" height="11" rx="1.5" fill="#2c5df2"/><path d="M3.1 5.6L4.8 7.2L7.9 4" fill="none" stroke="#fff" stroke-width="0.95"/></svg></span><span class="fl" style="left:405.3px">Other</span>
  </div>
</div>
</div>
</body>
</html>
